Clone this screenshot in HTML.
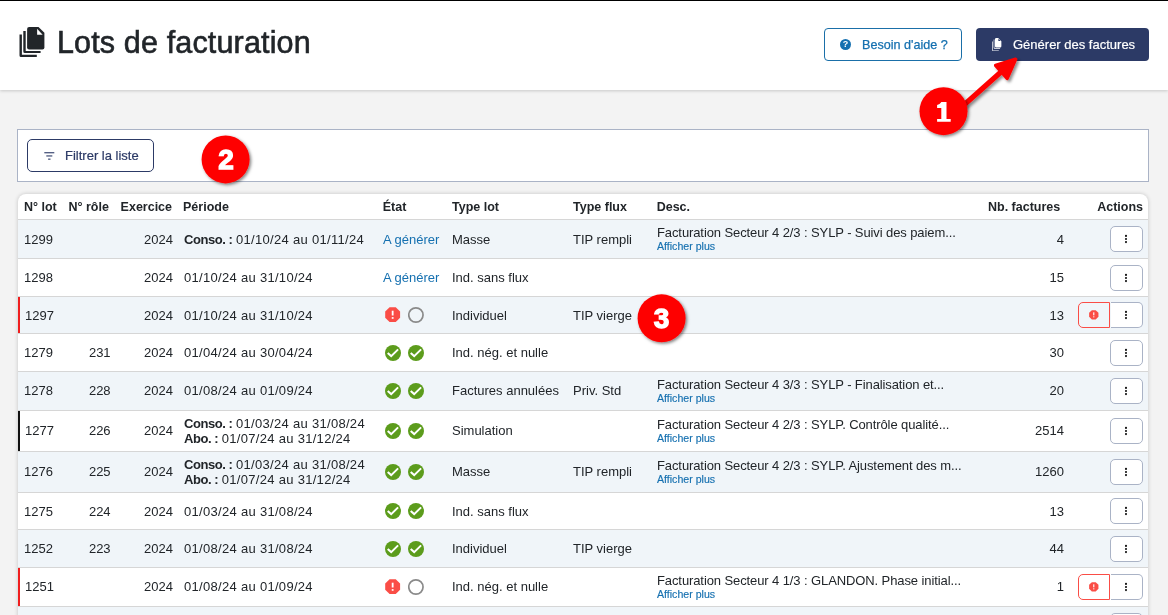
<!DOCTYPE html>
<html><head><meta charset="utf-8">
<style>
*{box-sizing:border-box;margin:0;padding:0}
html,body{width:1168px;height:615px;overflow:hidden;background:#f3f3f3;font-family:"Liberation Sans",sans-serif;color:#212529}
.topline{position:absolute;left:0;top:0;width:1168px;height:1px;background:#000}
.hdr{position:absolute;left:0;top:1px;width:1168px;height:89px;background:#fff;box-shadow:0 1px 3px rgba(0,0,0,.18)}
.title{position:absolute;left:57px;top:22.7px;font-size:30.5px;letter-spacing:0.15px;line-height:36px;color:#212529;white-space:nowrap;-webkit-text-stroke:0.6px #212529}
.ticon{position:absolute;left:19px;top:25px;width:27px;height:31px}
.btn-help{position:absolute;left:824px;top:27px;width:138px;height:33px;border:1px solid #1a6fa8;border-radius:4px;background:#fff;color:#1570b0;font-size:13px}
.btn-help span{position:absolute;left:37px;top:9px;white-space:nowrap;font-size:12.6px;-webkit-text-stroke:0.25px #1570b0}
.qic{position:absolute;left:15px;top:10px;width:11px;height:11px;border-radius:50%;background:#1570b0;color:#fff;font-size:9px;font-weight:700;text-align:center;line-height:11px}
.btn-gen{position:absolute;left:976px;top:27px;width:173px;height:33px;border-radius:4px;background:#2c3a66;color:#fff;font-size:13px}
.btn-gen span{position:absolute;left:37px;top:8.5px;white-space:nowrap;-webkit-text-stroke:0.2px #fff}
.filter{position:absolute;left:17px;top:129px;width:1132px;height:53px;background:#fff;border:1px solid #aab3c6}
.fbtn{position:absolute;left:9px;top:9px;width:127px;height:33px;border:1px solid #2c3a66;border-radius:5px;color:#2c3a66;font-size:13px}
.fbtn span{position:absolute;left:37px;top:7.7px;white-space:nowrap;-webkit-text-stroke:0.2px #2c3a66}
.fic{position:absolute;left:16px;top:12px}
.tbl{position:absolute;left:18px;top:193.5px;width:1130px;height:430px;background:#fff;border-radius:8px 8px 0 0;box-shadow:0 0 4px rgba(0,0,0,.2)}
.th{position:absolute;top:194px;height:26px;left:0;width:1168px}
.th .c{font-weight:700;font-size:12.5px}
.row{position:absolute;left:18px;width:1130px;border-top:1px solid #d6d6d6}
.row.alt{background:#f0f5f9}
.row .c{margin-left:-18px}
.c{position:absolute;top:0;bottom:0;display:flex;align-items:center;font-size:13px;white-space:nowrap;color:#212529}
.c.r{justify-content:flex-end}
.row .c.t{top:var(--dy);bottom:calc(0px - var(--dy))}
.per{line-height:15px}
.per1{line-height:normal}
.per b{letter-spacing:-0.45px}
.dt{letter-spacing:0.3px}
.link{color:#1570b0}
.icons .ic{width:16px;height:16px;margin-right:7px;display:block}
.desc{flex-direction:column;align-items:flex-start;justify-content:center;line-height:14px}
.desc>div:first-child{letter-spacing:-0.1px;position:relative;top:-0.8px}
.desc .more{font-size:10.6px;color:#1570b0;line-height:11px;margin-top:0px;-webkit-text-stroke:0.15px #1570b0}
.bar{position:absolute;left:0;top:0;bottom:0;width:2px}
.kbe{border-radius:0 5px 5px 0!important;border-left:none!important;width:32px!important;margin-left:1px}
.kb{width:33px;height:26px;border:1px solid #aab3c6;border-radius:5px;background:#fff;display:flex;align-items:center;justify-content:center}
.eb{width:32px;height:26px;border:1px solid #fa4d46;border-radius:5px 0 0 5px;background:transparent;display:flex;align-items:center;justify-content:center}
.badge{position:absolute;width:48px;height:48px;border-radius:50%;background:#fe0000;box-shadow:2px 2px 3px rgba(0,0,0,.45);color:#fff;font-weight:700;font-size:28px;text-align:center;line-height:48px}
</style></head><body><div id="wrap" style="position:absolute;left:0;top:0;width:1168px;height:615px;overflow:hidden;will-change:transform">
<div class="topline"></div>
<div class="hdr">
  <svg class="ticon" viewBox="0 0 27 31">
<path d="M10.1 0.9 H19.5 L25.4 6.8 V21.5 Q25.4 23.5 23.4 23.5 H10.1 Q8.1 23.5 8.1 21.5 V2.9 Q8.1 0.9 10.1 0.9 Z" fill="#212529"/>
<path d="M18.1 2.7 V8.8 H23.6 Z" fill="#fff"/>
<path d="M4.3 5 H6.7 V25 H21.6 V27.1 H5.8 Q4.3 27.1 4.3 25.6 Z" fill="#212529"/>
<path d="M0.5 8.5 H2.9 V28.8 H17.8 V30.9 H2 Q0.5 30.9 0.5 29.4 Z" fill="#212529"/>
</svg>
  <div class="title">Lots de facturation</div>
  <div class="btn-help"><div class="qic">?</div><span>Besoin d'aide ?</span></div>
  <div class="btn-gen"><svg width="11.5" height="13.3" viewBox="0 0 27 31" preserveAspectRatio="none" style="position:absolute;left:15.8px;top:9.6px">
<path d="M7.5 0 H14.5 L22 7.5 V19 Q22 22 19 22 H10 Q7 22 7 19 V3 Q7 0 10 0 Z" fill="#fff"/>
<path d="M15 1.6 L20.4 7 H15 Z" fill="#2c3a66"/>
<path d="M4 3.5 V23 Q4 25 6 25 H19 V23.3 H6.5 Q5.6 23.3 5.6 22.4 V3.5 Z" fill="#fff"/>
<path d="M0 8 V28 Q0 30 2 30 H16 V28.3 H2.5 Q1.6 28.3 1.6 27.4 V8 Z" fill="#fff"/>
</svg><span>Générer des factures</span></div>
</div>
<div class="filter"><div class="fbtn"><svg class="fic" width="11" height="8" viewBox="0 0 11 8"><rect x="0.3" y="0.2" width="10" height="1.1" fill="#2c3a66"/><rect x="2.3" y="3.4" width="6" height="1.1" fill="#2c3a66"/><rect x="4.1" y="6.6" width="2.4" height="1.1" fill="#2c3a66"/></svg><span>Filtrer la liste</span></div></div>
<div class="tbl"></div>
<div class="th">
 <div class="c" style="left:24px">N° lot</div>
 <div class="c" style="left:68.5px">N° rôle</div>
 <div class="c" style="left:120.6px">Exercice</div>
 <div class="c" style="left:183px">Période</div>
 <div class="c" style="left:382.7px">État</div>
 <div class="c" style="left:452px">Type lot</div>
 <div class="c" style="left:573px">Type flux</div>
 <div class="c" style="left:656.7px">Desc.</div>
 <div class="c" style="left:988px">Nb. factures</div>
 <div class="c r" style="right:25px">Actions</div>
</div>
<div class="row alt" style="top:219px;height:39px;--dy:0px"><div class="c t" style="left:24px">1299</div><div class="c r t" style="right:975px">2024</div><div class="c per per1 t" style="left:184px"><div><b>Conso. :</b> <span class="dt">01/10/24 au 01/11/24</span></div></div><div class="c t link" style="left:383px">A générer</div><div class="c t" style="left:452px">Masse</div><div class="c t" style="left:573px">TIP rempli</div><div class="c desc" style="left:657px"><div>Facturation Secteur 4 2/3 : SYLP - Suivi des paiem...</div><div class="more">Afficher plus</div></div><div class="c r t" style="right:84px">4</div><div class="c" style="left:1110px"><div class="kb"><svg viewBox="0 0 4 12" width="4" height="12" style="margin-right:1px"><circle cx="2" cy="2.9" r="1.05" fill="#111"/><circle cx="2" cy="6" r="1.05" fill="#111"/><circle cx="2" cy="9.1" r="1.05" fill="#111"/></svg></div></div></div><div class="row" style="top:258px;height:38px;--dy:0px"><div class="c t" style="left:24px">1298</div><div class="c r t" style="right:975px">2024</div><div class="c per per1 t" style="left:184px"><div><span class="dt">01/10/24 au 31/10/24</span></div></div><div class="c t link" style="left:383px">A générer</div><div class="c t" style="left:452px">Ind. sans flux</div><div class="c r t" style="right:84px">15</div><div class="c" style="left:1110px"><div class="kb"><svg viewBox="0 0 4 12" width="4" height="12" style="margin-right:1px"><circle cx="2" cy="2.9" r="1.05" fill="#111"/><circle cx="2" cy="6" r="1.05" fill="#111"/><circle cx="2" cy="9.1" r="1.05" fill="#111"/></svg></div></div></div><div class="row alt" style="top:296px;height:37px;--dy:0px"><div class="bar" style="background:#f01e1e"></div><div class="c t" style="left:25px">1297</div><div class="c r t" style="right:975px">2024</div><div class="c per per1 t" style="left:184px"><div><span class="dt">01/10/24 au 31/10/24</span></div></div><div class="c icons" style="left:385px"><svg class="ic" viewBox="0 0 16 16"><path d="M4.56 0.2 H10.73 L15.1 4.56 V10.73 L10.73 15.1 H4.56 L0.2 10.73 V4.56 Z" fill="#fa4d46"/><rect x="6.75" y="3.7" width="1.8" height="4.8" fill="#fff"/><rect x="6.75" y="10.1" width="1.8" height="1.7" fill="#fff"/></svg><svg class="ic" viewBox="0 0 16 16"><circle cx="7.9" cy="8" r="7.15" fill="none" stroke="#8a8a8a" stroke-width="1.7"/></svg></div><div class="c t" style="left:452px">Individuel</div><div class="c t" style="left:573px">TIP vierge</div><div class="c r t" style="right:84px">13</div><div class="c" style="left:1110px"><div class="kb kbe"><svg viewBox="0 0 4 12" width="4" height="12" style="margin-right:1px"><circle cx="2" cy="2.9" r="1.05" fill="#111"/><circle cx="2" cy="6" r="1.05" fill="#111"/><circle cx="2" cy="9.1" r="1.05" fill="#111"/></svg></div></div><div class="c" style="left:1078px"><div class="eb"><svg viewBox="0 0 16 16" width="10" height="10"><path d="M4.56 0.2 H10.73 L15.1 4.56 V10.73 L10.73 15.1 H4.56 L0.2 10.73 V4.56 Z" fill="#fa4d46"/><rect x="6.75" y="3.7" width="1.8" height="4.8" fill="#fff"/><rect x="6.75" y="10.1" width="1.8" height="1.7" fill="#fff"/></svg></div></div></div><div class="row" style="top:333px;height:38px;--dy:0px"><div class="c t" style="left:24px">1279</div><div class="c r t" style="right:1037.4px">231</div><div class="c r t" style="right:975px">2024</div><div class="c per per1 t" style="left:184px"><div><span class="dt">01/04/24 au 30/04/24</span></div></div><div class="c icons" style="left:385px"><svg class="ic" viewBox="0 0 16 16"><circle cx="8" cy="8" r="8" fill="#5c9c1c"/><path d="M2.7 7.9 L6.2 11.1 L13.1 4.4" stroke="#fff" stroke-width="2" fill="none" stroke-linecap="butt" stroke-linejoin="miter"/></svg><svg class="ic" viewBox="0 0 16 16"><circle cx="8" cy="8" r="8" fill="#5c9c1c"/><path d="M2.7 7.9 L6.2 11.1 L13.1 4.4" stroke="#fff" stroke-width="2" fill="none" stroke-linecap="butt" stroke-linejoin="miter"/></svg></div><div class="c t" style="left:452px">Ind. nég. et nulle</div><div class="c r t" style="right:84px">30</div><div class="c" style="left:1110px"><div class="kb"><svg viewBox="0 0 4 12" width="4" height="12" style="margin-right:1px"><circle cx="2" cy="2.9" r="1.05" fill="#111"/><circle cx="2" cy="6" r="1.05" fill="#111"/><circle cx="2" cy="9.1" r="1.05" fill="#111"/></svg></div></div></div><div class="row alt" style="top:371px;height:39px;--dy:-1px"><div class="c t" style="left:24px">1278</div><div class="c r t" style="right:1037.4px">228</div><div class="c r t" style="right:975px">2024</div><div class="c per per1 t" style="left:184px"><div><span class="dt">01/08/24 au 01/09/24</span></div></div><div class="c icons" style="left:385px"><svg class="ic" viewBox="0 0 16 16"><circle cx="8" cy="8" r="8" fill="#5c9c1c"/><path d="M2.7 7.9 L6.2 11.1 L13.1 4.4" stroke="#fff" stroke-width="2" fill="none" stroke-linecap="butt" stroke-linejoin="miter"/></svg><svg class="ic" viewBox="0 0 16 16"><circle cx="8" cy="8" r="8" fill="#5c9c1c"/><path d="M2.7 7.9 L6.2 11.1 L13.1 4.4" stroke="#fff" stroke-width="2" fill="none" stroke-linecap="butt" stroke-linejoin="miter"/></svg></div><div class="c t" style="left:452px">Factures annulées</div><div class="c t" style="left:573px">Priv. Std</div><div class="c desc" style="left:657px"><div>Facturation Secteur 4 3/3 : SYLP - Finalisation et...</div><div class="more">Afficher plus</div></div><div class="c r t" style="right:84px">20</div><div class="c" style="left:1110px"><div class="kb"><svg viewBox="0 0 4 12" width="4" height="12" style="margin-right:1px"><circle cx="2" cy="2.9" r="1.05" fill="#111"/><circle cx="2" cy="6" r="1.05" fill="#111"/><circle cx="2" cy="9.1" r="1.05" fill="#111"/></svg></div></div></div><div class="row" style="top:410px;height:41px;--dy:-1px"><div class="bar" style="background:#111"></div><div class="c t" style="left:25px">1277</div><div class="c r t" style="right:1037.4px">226</div><div class="c r t" style="right:975px">2024</div><div class="c per" style="left:184px"><div><b>Conso. :</b> <span class="dt">01/03/24 au 31/08/24</span><br><b>Abo. :</b> <span class="dt">01/07/24 au 31/12/24</span></div></div><div class="c icons" style="left:385px"><svg class="ic" viewBox="0 0 16 16"><circle cx="8" cy="8" r="8" fill="#5c9c1c"/><path d="M2.7 7.9 L6.2 11.1 L13.1 4.4" stroke="#fff" stroke-width="2" fill="none" stroke-linecap="butt" stroke-linejoin="miter"/></svg><svg class="ic" viewBox="0 0 16 16"><circle cx="8" cy="8" r="8" fill="#5c9c1c"/><path d="M2.7 7.9 L6.2 11.1 L13.1 4.4" stroke="#fff" stroke-width="2" fill="none" stroke-linecap="butt" stroke-linejoin="miter"/></svg></div><div class="c t" style="left:452px">Simulation</div><div class="c desc" style="left:657px"><div>Facturation Secteur 4 2/3 : SYLP. Contrôle qualité...</div><div class="more">Afficher plus</div></div><div class="c r t" style="right:84px">2514</div><div class="c" style="left:1110px"><div class="kb"><svg viewBox="0 0 4 12" width="4" height="12" style="margin-right:1px"><circle cx="2" cy="2.9" r="1.05" fill="#111"/><circle cx="2" cy="6" r="1.05" fill="#111"/><circle cx="2" cy="9.1" r="1.05" fill="#111"/></svg></div></div></div><div class="row alt" style="top:451px;height:41px;--dy:-1px"><div class="c t" style="left:24px">1276</div><div class="c r t" style="right:1037.4px">225</div><div class="c r t" style="right:975px">2024</div><div class="c per" style="left:184px"><div><b>Conso. :</b> <span class="dt">01/03/24 au 31/08/24</span><br><b>Abo. :</b> <span class="dt">01/07/24 au 31/12/24</span></div></div><div class="c icons" style="left:385px"><svg class="ic" viewBox="0 0 16 16"><circle cx="8" cy="8" r="8" fill="#5c9c1c"/><path d="M2.7 7.9 L6.2 11.1 L13.1 4.4" stroke="#fff" stroke-width="2" fill="none" stroke-linecap="butt" stroke-linejoin="miter"/></svg><svg class="ic" viewBox="0 0 16 16"><circle cx="8" cy="8" r="8" fill="#5c9c1c"/><path d="M2.7 7.9 L6.2 11.1 L13.1 4.4" stroke="#fff" stroke-width="2" fill="none" stroke-linecap="butt" stroke-linejoin="miter"/></svg></div><div class="c t" style="left:452px">Masse</div><div class="c t" style="left:573px">TIP rempli</div><div class="c desc" style="left:657px"><div>Facturation Secteur 4 2/3 : SYLP. Ajustement des m...</div><div class="more">Afficher plus</div></div><div class="c r t" style="right:84px">1260</div><div class="c" style="left:1110px"><div class="kb"><svg viewBox="0 0 4 12" width="4" height="12" style="margin-right:1px"><circle cx="2" cy="2.9" r="1.05" fill="#111"/><circle cx="2" cy="6" r="1.05" fill="#111"/><circle cx="2" cy="9.1" r="1.05" fill="#111"/></svg></div></div></div><div class="row" style="top:492px;height:37px;--dy:0px"><div class="c t" style="left:24px">1275</div><div class="c r t" style="right:1037.4px">224</div><div class="c r t" style="right:975px">2024</div><div class="c per per1 t" style="left:184px"><div><span class="dt">01/03/24 au 31/08/24</span></div></div><div class="c icons" style="left:385px"><svg class="ic" viewBox="0 0 16 16"><circle cx="8" cy="8" r="8" fill="#5c9c1c"/><path d="M2.7 7.9 L6.2 11.1 L13.1 4.4" stroke="#fff" stroke-width="2" fill="none" stroke-linecap="butt" stroke-linejoin="miter"/></svg><svg class="ic" viewBox="0 0 16 16"><circle cx="8" cy="8" r="8" fill="#5c9c1c"/><path d="M2.7 7.9 L6.2 11.1 L13.1 4.4" stroke="#fff" stroke-width="2" fill="none" stroke-linecap="butt" stroke-linejoin="miter"/></svg></div><div class="c t" style="left:452px">Ind. sans flux</div><div class="c r t" style="right:84px">13</div><div class="c" style="left:1110px"><div class="kb"><svg viewBox="0 0 4 12" width="4" height="12" style="margin-right:1px"><circle cx="2" cy="2.9" r="1.05" fill="#111"/><circle cx="2" cy="6" r="1.05" fill="#111"/><circle cx="2" cy="9.1" r="1.05" fill="#111"/></svg></div></div></div><div class="row alt" style="top:529px;height:38px;--dy:0px"><div class="c t" style="left:24px">1252</div><div class="c r t" style="right:1037.4px">223</div><div class="c r t" style="right:975px">2024</div><div class="c per per1 t" style="left:184px"><div><span class="dt">01/08/24 au 31/08/24</span></div></div><div class="c icons" style="left:385px"><svg class="ic" viewBox="0 0 16 16"><circle cx="8" cy="8" r="8" fill="#5c9c1c"/><path d="M2.7 7.9 L6.2 11.1 L13.1 4.4" stroke="#fff" stroke-width="2" fill="none" stroke-linecap="butt" stroke-linejoin="miter"/></svg><svg class="ic" viewBox="0 0 16 16"><circle cx="8" cy="8" r="8" fill="#5c9c1c"/><path d="M2.7 7.9 L6.2 11.1 L13.1 4.4" stroke="#fff" stroke-width="2" fill="none" stroke-linecap="butt" stroke-linejoin="miter"/></svg></div><div class="c t" style="left:452px">Individuel</div><div class="c t" style="left:573px">TIP vierge</div><div class="c r t" style="right:84px">44</div><div class="c" style="left:1110px"><div class="kb"><svg viewBox="0 0 4 12" width="4" height="12" style="margin-right:1px"><circle cx="2" cy="2.9" r="1.05" fill="#111"/><circle cx="2" cy="6" r="1.05" fill="#111"/><circle cx="2" cy="9.1" r="1.05" fill="#111"/></svg></div></div></div><div class="row" style="top:567px;height:39px;--dy:-0.5px"><div class="bar" style="background:#f01e1e"></div><div class="c t" style="left:25px">1251</div><div class="c r t" style="right:975px">2024</div><div class="c per per1 t" style="left:184px"><div><span class="dt">01/08/24 au 01/09/24</span></div></div><div class="c icons" style="left:385px"><svg class="ic" viewBox="0 0 16 16"><path d="M4.56 0.2 H10.73 L15.1 4.56 V10.73 L10.73 15.1 H4.56 L0.2 10.73 V4.56 Z" fill="#fa4d46"/><rect x="6.75" y="3.7" width="1.8" height="4.8" fill="#fff"/><rect x="6.75" y="10.1" width="1.8" height="1.7" fill="#fff"/></svg><svg class="ic" viewBox="0 0 16 16"><circle cx="7.9" cy="8" r="7.15" fill="none" stroke="#8a8a8a" stroke-width="1.7"/></svg></div><div class="c t" style="left:452px">Ind. nég. et nulle</div><div class="c desc" style="left:657px"><div>Facturation Secteur 4 1/3 : GLANDON. Phase initial...</div><div class="more">Afficher plus</div></div><div class="c r t" style="right:84px">1</div><div class="c" style="left:1110px"><div class="kb kbe"><svg viewBox="0 0 4 12" width="4" height="12" style="margin-right:1px"><circle cx="2" cy="2.9" r="1.05" fill="#111"/><circle cx="2" cy="6" r="1.05" fill="#111"/><circle cx="2" cy="9.1" r="1.05" fill="#111"/></svg></div></div><div class="c" style="left:1078px"><div class="eb"><svg viewBox="0 0 16 16" width="10" height="10"><path d="M4.56 0.2 H10.73 L15.1 4.56 V10.73 L10.73 15.1 H4.56 L0.2 10.73 V4.56 Z" fill="#fa4d46"/><rect x="6.75" y="3.7" width="1.8" height="4.8" fill="#fff"/><rect x="6.75" y="10.1" width="1.8" height="1.7" fill="#fff"/></svg></div></div></div><div class="row alt" style="top:606px;height:38px;--dy:0px"><div class="c" style="left:1110px"><div class="kb"><svg viewBox="0 0 4 12" width="4" height="12" style="margin-right:1px"><circle cx="2" cy="2.9" r="1.05" fill="#111"/><circle cx="2" cy="6" r="1.05" fill="#111"/><circle cx="2" cy="9.1" r="1.05" fill="#111"/></svg></div></div></div>
<svg style="position:absolute;left:0;top:0" width="1168" height="615">
 <defs><filter id="sh" x="-20%" y="-20%" width="150%" height="150%"><feDropShadow dx="2" dy="2" stdDeviation="1.5" flood-color="#000" flood-opacity="0.45"/></filter></defs>
 <g filter="url(#sh)">
  <line x1="960" y1="108.5" x2="1006" y2="67.5" stroke="#fe0000" stroke-width="5.2"/>
  <path d="M1015.6 59.2 L995.6 65.4 L1007.1 78.5 Z" fill="#fe0000" stroke="#fe0000" stroke-width="3.4" stroke-linejoin="round"/>
 </g>
</svg>
<svg style="position:absolute;left:0;top:0" width="1168" height="615">
 <defs><filter id="bs" x="-30%" y="-30%" width="170%" height="170%"><feDropShadow dx="1.5" dy="1.5" stdDeviation="1.5" flood-color="#000" flood-opacity="0.5"/></filter></defs>
 <circle cx="943.5" cy="111.2" r="24" fill="#fe0000" filter="url(#bs)"/>
 <circle cx="225.6" cy="159.4" r="24" fill="#fe0000" filter="url(#bs)"/>
 <circle cx="661.6" cy="318.3" r="24" fill="#fe0000" filter="url(#bs)"/>
 <path d="M937.1 104.9 Q939.8 104.4 941.4 102 H946.5 V119 H950.7 V121.8 H937.1 V119 H941.3 V107.9 H937.1 Z" fill="#fff"/>
 <text x="226" y="169.4" font-family="Liberation Sans" font-weight="700" font-size="28" fill="#fff" stroke="#fff" stroke-width="1.3" text-anchor="middle">2</text>
 <text x="661.5" y="328.4" font-family="Liberation Sans" font-weight="700" font-size="28" fill="#fff" stroke="#fff" stroke-width="1.3" text-anchor="middle">3</text>
</svg>
</div></body></html>
